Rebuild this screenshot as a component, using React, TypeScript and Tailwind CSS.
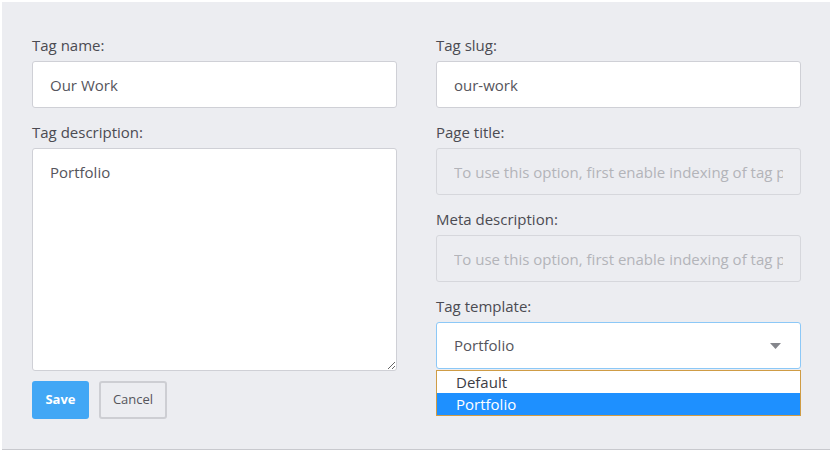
import * as React from 'react';

const font = { fontFamily: '"Open Sans", "Noto Sans", Arial, sans-serif' };

function Label({ children }: { children: React.ReactNode }) {
  return <label className="block text-[15px] leading-[22px] text-[#4b4b52] mb-[5px]">{children}</label>;
}

const inputCls =
  'block w-full h-[47px] rounded-[3px] border border-[#cfd0d6] bg-white px-[17px] text-[15px] text-[#55555c] outline-none';

export default function App() {
  return (
    <div className="w-[832px] h-[476px] bg-white pt-[2px] pl-[2px]" style={font}>
      <div className="w-[828px] h-[448px] bg-[#ecedf1] border-b border-[#c8c9ce] pl-[30px] pt-[32px]">
        <div className="grid grid-cols-[365px_365px] gap-x-[39px]">
          {/* Left column */}
          <div>
            <div className="mb-[13px]">
              <Label>Tag name:</Label>
              <input className={inputCls} defaultValue="Our Work" />
            </div>
            <div>
              <Label>Tag description:</Label>
              <textarea
                className="block w-full h-[223px] rounded-[3px] border border-[#cfd0d6] bg-white px-[17px] py-[12px] text-[15px] leading-[22px] text-[#55555c] outline-none resize-y"
                defaultValue="Portfolio"
              />
            </div>
            <div className="flex gap-[10px] mt-[10px]">
              <button className="h-[38px] w-[57px] rounded-[3px] bg-[#42a7f5] text-white text-[13px] font-bold">
                Save
              </button>
              <button className="h-[38px] w-[68px] rounded-[3px] border-2 border-[#cdced3] text-[#55555c] text-[13px]">
                Cancel
              </button>
            </div>
          </div>

          {/* Right column */}
          <div>
            <div className="mb-[13px]">
              <Label>Tag slug:</Label>
              <input className={inputCls} defaultValue="our-work" />
            </div>
            <div className="mb-[13px]">
              <Label>Page title:</Label>
              <input
                disabled
                className="block w-full h-[47px] rounded-[3px] border border-[#d6d7dc] bg-[#ecedf1] px-[17px] text-[15px] placeholder:text-[#b3b4b9] outline-none"
                placeholder="To use this option, first enable indexing of tag pages"
              />
            </div>
            <div className="mb-[13px]">
              <Label>Meta description:</Label>
              <input
                disabled
                className="block w-full h-[47px] rounded-[3px] border border-[#d6d7dc] bg-[#ecedf1] px-[17px] text-[15px] placeholder:text-[#b3b4b9] outline-none"
                placeholder="To use this option, first enable indexing of tag pages"
              />
            </div>
            <div className="relative">
              <Label>Tag template:</Label>
              <div className="flex items-center justify-between h-[47px] rounded-[3px] border border-[#8cc8f7] bg-white pl-[17px] pr-[19px] text-[15px] text-[#55555c]">
                <span>Portfolio</span>
                <svg width="11" height="6" viewBox="0 0 11 6">
                  <path d="M0 0h11L5.5 6z" fill="#85868c" />
                </svg>
              </div>
              <div className="absolute left-0 right-0 top-[75px] border border-[#cf9c45] bg-white text-[15px] leading-[22px]">
                <div className="pl-[19px] text-[#3c3c44]">Default</div>
                <div className="pl-[19px] bg-[#1e90ff] text-white">Portfolio</div>
              </div>
            </div>
          </div>
        </div>
      </div>
    </div>
  );
}
